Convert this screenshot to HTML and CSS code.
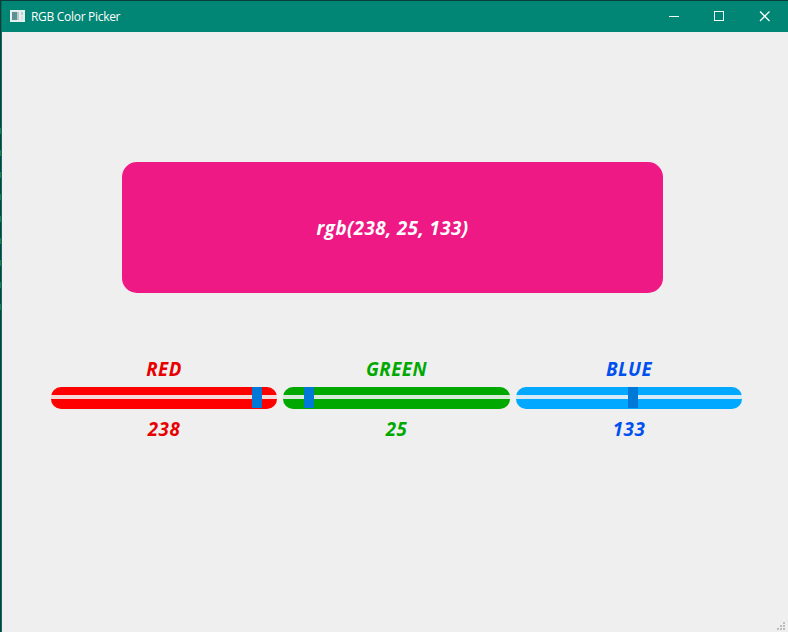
FILE: index.html
```html
<!DOCTYPE html>
<html lang="en">
<head>
<meta charset="utf-8">
<title>RGB Color Picker</title>
<link rel="stylesheet" href="styles.css">
</head>
<body>
<div class="window">
  <header class="titlebar">
    <svg class="app-icon" width="15" height="12" viewBox="0 0 15 12" shape-rendering="crispEdges">
      <rect width="15" height="12" fill="#e3f0ee"/>
      <rect x="2" y="2" width="5" height="8" fill="#5d8f93"/>
      <rect x="7" y="2" width="2" height="8" fill="#b5cbcd"/>
      <rect x="11" y="2" width="2" height="3" fill="#b5d0cf"/>
      <rect x="11" y="6" width="2" height="4" fill="#d3e3e1"/>
    </svg>
    <h1 class="title">RGB Color Picker</h1>
    <div class="controls">
      <svg width="46" height="30" viewBox="0 0 46 30"><path d="M19 15.500h10"/></svg>
      <svg width="46" height="30" viewBox="0 0 46 30"><path d="M18.500 10.500h9v9h-9z"/></svg>
      <svg width="46" height="30" viewBox="0 0 46 30"><path class="close" d="M18 10.500l9.500 9.500M27.500 10.500l-9.500 9.500"/></svg>
    </div>
  </header>
  <main class="content">
    <div class="swatch"><span class="swatch-text">rgb(238, 25, 133)</span></div>
    <div class="channels">
      <section class="channel red">
        <span class="label">RED</span>
        <div class="slider"><i class="before"></i><i class="handle"></i></div>
        <span class="value">238</span>
      </section>
      <section class="channel green">
        <span class="label">GREEN</span>
        <div class="slider"><i class="before"></i><i class="handle"></i></div>
        <span class="value">25</span>
      </section>
      <section class="channel blue">
        <span class="label">BLUE</span>
        <div class="slider"><i class="before"></i><i class="handle"></i></div>
        <span class="value">133</span>
      </section>
    </div>
    <svg class="grip" width="8" height="8" viewBox="0 0 8 8" shape-rendering="crispEdges">
      <path fill="#bdbdbd" d="M6 0h2v2h-2zM3 3h2v2h-2zM6 3h2v2h-2zM0 6h2v2h-2zM3 6h2v2h-2zM6 6h2v2h-2z"/>
    </svg>
  </main>
</div>
</body>
</html>
```
FILE: styles.css
```css
* { box-sizing: border-box; }
body {
  margin: 0;
  height: 632px;
  overflow: hidden;
  background: #efefef;
  font-family: "Open Sans", "Noto Sans", sans-serif;
}
.window {
  height: 632px;
  padding: 1px 0 0 2px;
  /* dark edge with the marks that show through beside the window */
  background:
    repeating-linear-gradient(#27784f 0 6px, transparent 6px 22px) 0 128px / 1px 182px no-repeat,
    linear-gradient(90deg, #073f3c 1px, #0b6c60 1px 2px, transparent 2px) 0 1px no-repeat,
    #0b3c3a;
  display: flex;
  flex-direction: column;
}
.titlebar {
  height: 31px;
  flex: none;
  display: flex;
  align-items: center;
  padding-left: 8px;
  background: #018574;
}
.app-icon { flex: none; position: relative; top: -1px; }
.title {
  margin: 0 auto 0 6px;
  font-size: 12px;
  font-weight: 400;
  line-height: 16px;
  letter-spacing: -0.3px;
  color: #fff;
}
.controls { display: flex; height: 30px; align-self: flex-start; }
.controls path { fill: none; stroke: #f2fffc; stroke-width: 1; shape-rendering: crispEdges; }
.controls .close { stroke-width: 1.3; shape-rendering: auto; }
.content {
  flex: 1;
  display: flex;
  flex-direction: column;
  padding: 130px 0 0 49px;
  background: #efefef;
}
.swatch {
  width: 541px;
  height: 131px;
  flex: none;
  margin-left: 71px;
  border-radius: 15px;
  background: #ee1985;
  display: flex;
  align-items: center;
  justify-content: center;
}
.swatch-text, .label, .value {
  font-size: 18.67px;
  font-style: italic;
  font-weight: 700;
  line-height: 24px;
  letter-spacing: 0.5px;
  white-space: nowrap;
}
.swatch-text { color: #fff; letter-spacing: 0.45px; }
.channels {
  display: grid;
  grid-template-columns: 226px 227px 226px;
  gap: 6px;
  margin-top: 64px;
}
.channel {
  display: flex;
  flex-direction: column;
  align-items: center;
}
.slider {
  align-self: stretch;
  height: 22px;
  margin: 6px 0 8px;
  border-radius: 10px;
  overflow: hidden;
  display: flex;
  background: linear-gradient(var(--track) 8px, var(--groove) 8px 12px, var(--track) 12px);
}
.handle { width: 10px; height: 21px; background: #0078d7; }
.red { color: #e80000; --track: #ff0000; --groove: #f6dada; }
.green { color: #00a800; --track: #00a800; --groove: #d8ead8; }
.blue { color: #0050f0; --track: #00a8ff; --groove: #d3ebf6; }
.red .before { width: 201px; }
.green .before { width: 21px; }
.blue .before { width: 112px; }
.grip { margin: auto 3px 2px auto; }
```
